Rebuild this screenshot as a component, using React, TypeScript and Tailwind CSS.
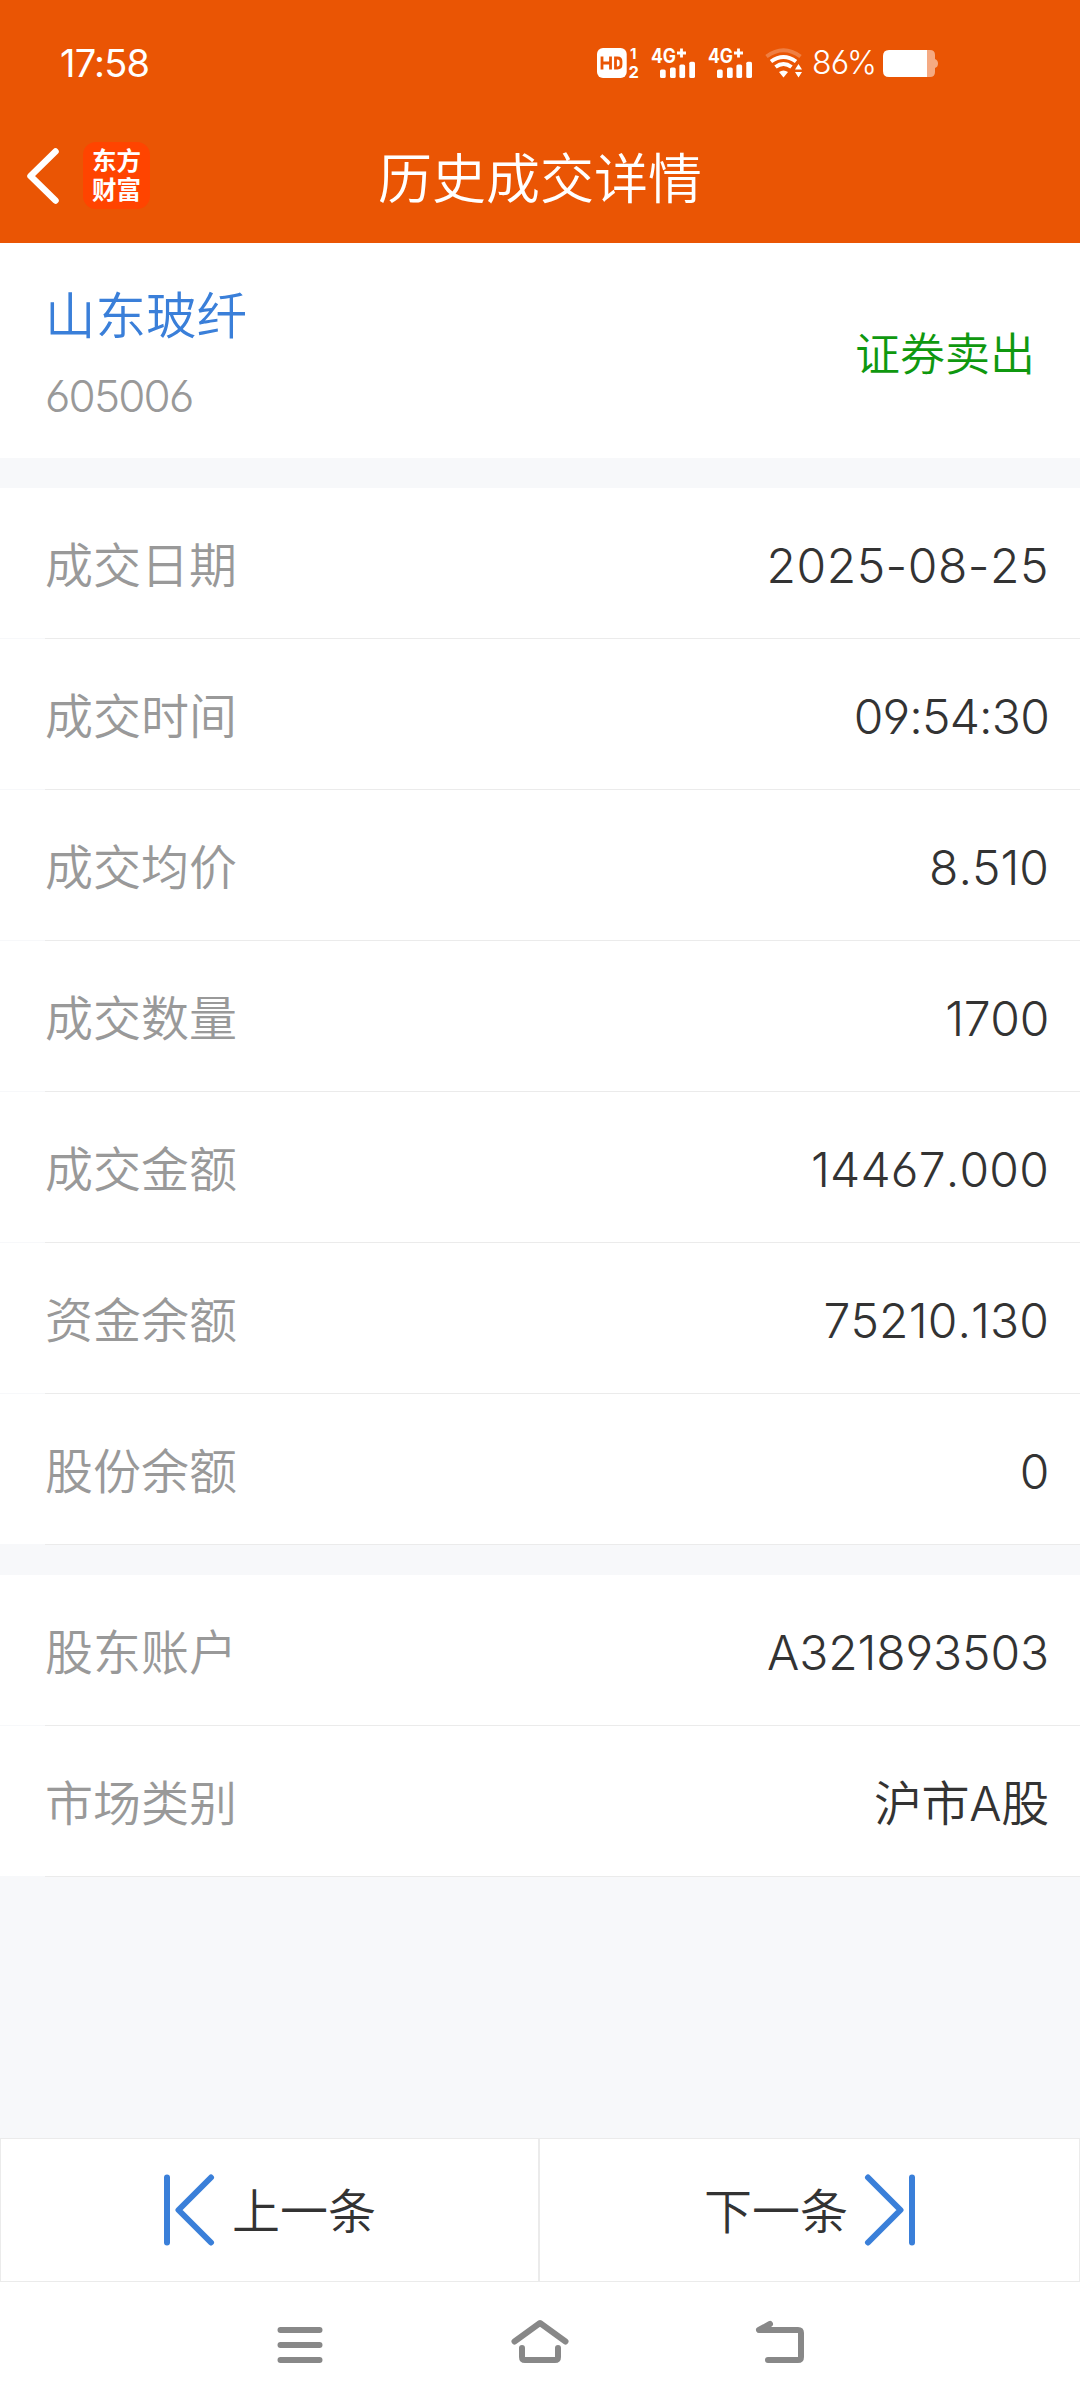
import React from 'react';

const tradeRows = [
  { label: '成交日期', value: '2025-08-25', tracking: 'tracking-[0.5px]' },
  { label: '成交时间', value: '09:54:30', tracking: 'tracking-[-0.8px]' },
  { label: '成交均价', value: '8.510', tracking: 'tracking-[0px]' },
  { label: '成交数量', value: '1700', tracking: 'tracking-[-0.3px]' },
  { label: '成交金额', value: '14467.000', tracking: 'tracking-[0.2px]' },
  { label: '资金余额', value: '75210.130', tracking: 'tracking-[0.1px]' },
  { label: '股份余额', value: '0', tracking: 'tracking-[-0.3px]' },
];

const accountRows = [
  { label: '股东账户', value: 'A321893503', tracking: 'tracking-[-0.1px]' },
  { label: '市场类别', value: '沪市A股', tracking: 'tracking-[-0.3px]' },
];

const Signal = () => (
  <svg className="h-[30px] w-[45px] overflow-visible" viewBox="0 0 45 30" fill="#fff">
    <text x="0" y="15" fontSize="19.5" fontWeight="700" textLength="25" lengthAdjust="spacingAndGlyphs">
      4G
    </text>
    <path d="M26 5h9M30.5 .5v9" stroke="#fff" strokeWidth="2.8" />
    <rect x="9" y="21.5" width="5.7" height="8.5" rx="1.6" />
    <rect x="19" y="19.5" width="5.7" height="10.5" rx="1.6" />
    <rect x="28.4" y="16.5" width="5.7" height="13.5" rx="1.6" />
    <rect x="38.3" y="13.7" width="5.7" height="16.3" rx="1.6" />
  </svg>
);

const StatusBar = () => (
  <div className="flex h-[126px] items-center pl-[60px] text-white">
    <span className="w-[536px] text-[38px] leading-[38px] tracking-[-0.8px]">17:58</span>
    {/* VoLTE 双卡标识 */}
    <svg className="h-[30px] w-[43px] overflow-visible" viewBox="0 0 43 30" fill="#fff">
      <rect x="1" y="0" width="29.7" height="30" rx="6" />
      <path d="M6 8.5v13M14.5 8.5v13M6 15h8.5M19.500 10v10h2q3.500 0 3.500-3.500v-3q0-3.500-3.500-3.500z" fill="none" stroke="#ea5504" strokeWidth="2.8" />
      <text x="34" y="11" fontSize="15" fontWeight="700">1</text>
      <text x="32.5" y="29.5" fontSize="16.5" fontWeight="700">2</text>
    </svg>
    <div className="ml-[12px] flex gap-[12px]">
      <Signal />
      <Signal />
    </div>
    <svg className="ml-[12px] h-[30px] w-[38px]" viewBox="0 0 38 30" fill="none" stroke="#fff">
      <path d="M1.5 8.5Q18.5-4 35.5 8.5" strokeWidth="4" opacity=".25" />
      <path d="M6 13.500Q18.500 4.500 31 13.500" strokeWidth="4" />
      <path d="M10.500 19Q18.500 13 26.500 19" strokeWidth="4" />
      <path d="M14 24q4.500-3 9 0l-4.500 5.500z" fill="#fff" stroke="none" />
      <path d="M33.500 16l3.500 5.500h-7zM33.500 29.500l3.500-5.500h-7z" fill="#fff" stroke="none" />
    </svg>
    <span className="ml-[9px] w-[63px] whitespace-nowrap text-[32px] font-light leading-[32px] tracking-[-0.9px]">86%</span>
    <svg className="ml-[8px] h-[27px] w-[55px]" viewBox="0 0 55 27" fill="#fff">
      <path d="M44 0h3q5 0 5 5v4q3 1 3 4.500t-3 4.500v4q0 5-5 5h-3z" opacity=".5" />
      <path d="M6 0h38v27H6q-6 0-6-6V6q0-6 6-6z" />
    </svg>
  </div>
);

const TitleBar = () => (
  <div className="grid h-[117px] grid-cols-[1fr_auto_1fr] items-start text-white">
    <div className="flex pl-[26px] pt-[16px]">
      <svg className="mt-[5px] h-[58px] w-[36px]" viewBox="0 0 36 58" fill="none" stroke="#fff" strokeWidth="6.5" strokeLinecap="round" strokeLinejoin="round">
        <path d="M29.500 4.500L4.500 29l25 24.500" />
      </svg>
      <div className="ml-[21px] flex h-[67px] w-[67px] flex-col items-center justify-center rounded-[13px] bg-[#ff4400] text-[24.5px] font-bold leading-[29px]">
        <span>东方</span>
        <span>财富</span>
      </div>
    </div>
    <h1 className="pt-[24px] text-[54px] font-[350] leading-[60px]">历史成交详情</h1>
    <div />
  </div>
);

const DetailRow = ({ label, value, tracking }) => (
  <div className="h-[151px] bg-white">
    <div className="flex h-[150px] items-center justify-between pl-[45px] pr-[31px] pt-[6px] text-[48px] leading-[60px]">
      <span className="font-[350] text-[#999]">{label}</span>
      <span className={`font-[350] text-[#333] [font-kerning:none] ${tracking}`}>{value}</span>
    </div>
    {/* 左侧 45px 的分割线更浅 */}
    <div className="flex h-px">
      <div className="w-[45px] bg-[#f7f8fa]" />
      <div className="flex-1 bg-[#ebebeb]" />
    </div>
  </div>
);

const PrevIcon = () => (
  <svg className="h-[72px] w-[52px]" viewBox="0 0 52 72" fill="none" stroke="#3a7fd9" strokeWidth="6" strokeLinecap="round" strokeLinejoin="round">
    <path d="M4 3.500v65M48 3.500L15.500 36 48 68.500" />
  </svg>
);

const NextIcon = () => (
  <svg className="h-[72px] w-[52px]" viewBox="0 0 52 72" fill="none" stroke="#3a7fd9" strokeWidth="6" strokeLinecap="round" strokeLinejoin="round">
    <path d="M48 3.500v65M4 3.500L36.500 36 4 68.500" />
  </svg>
);

const Pager = () => (
  <div className="flex h-[144px] text-[48px] font-[350] leading-[60px] text-[#333]">
    <button className="flex flex-1 items-center border border-[#ebebeb] bg-white pl-[162px]">
      <PrevIcon />
      <span className="ml-[17px] pt-[4px]">上一条</span>
    </button>
    <button className="flex flex-1 items-center border border-[#ebebeb] bg-white pl-[164px]">
      <span className="mr-[16px] pt-[4px]">下一条</span>
      <NextIcon />
    </button>
  </div>
);

const SystemNav = () => (
  <div className="flex h-[126px] items-center justify-center gap-[180px] bg-white">
    <svg className="h-[60px] w-[60px]" viewBox="0 0 60 60" fill="none" stroke="#888" strokeWidth="6" strokeLinecap="round">
      <path d="M10.500 15h39M10.500 30h39M10.500 45h39" />
    </svg>
    <svg className="h-[60px] w-[60px]" viewBox="0 0 60 60" fill="none" stroke="#888" strokeWidth="6" strokeLinecap="round" strokeLinejoin="round">
      <path d="M4.500 26.500L30 8l25.500 18.500M12 33v9q0 3 3 3h30q3 0 3-3v-9" />
    </svg>
    <svg className="h-[60px] w-[60px]" viewBox="0 0 60 60" fill="none" stroke="#888" strokeWidth="6" strokeLinecap="round" strokeLinejoin="round">
      <path d="M20 9L9 15h39q3 0 3 3v24q0 3-3 3H18" />
    </svg>
  </div>
);

export default function App() {
  return (
    <div className="flex h-[2408px] w-[1080px] flex-col bg-[#f7f8fa] font-['Inter','Noto_Sans_CJK_SC',sans-serif] [font-feature-settings:'cv03','cv04']">
      <header className="h-[243px] bg-[#ea5504]">
        <StatusBar />
        <TitleBar />
      </header>

      <section className="flex h-[215px] items-center justify-between bg-white px-[45px] pt-[8px]">
        <div>
          <div className="text-[50.5px] font-[350] leading-[60px] text-[#3a7fd9]">山东玻纤</div>
          <div className="mt-[23px] text-[44px] font-[350] leading-[54px] tracking-[-1.8px] text-[#999]">605006</div>
        </div>
        <span className="text-[45px] font-[350] leading-[60px] text-[#0f980f]">证券卖出</span>
      </section>

      <section className="mt-[30px]">
        {tradeRows.map((row) => (
          <DetailRow key={row.label} {...row} />
        ))}
      </section>

      <section className="mt-[30px]">
        {accountRows.map((row) => (
          <DetailRow key={row.label} {...row} />
        ))}
      </section>

      <footer className="mt-auto">
        <Pager />
        <SystemNav />
      </footer>
    </div>
  );
}
